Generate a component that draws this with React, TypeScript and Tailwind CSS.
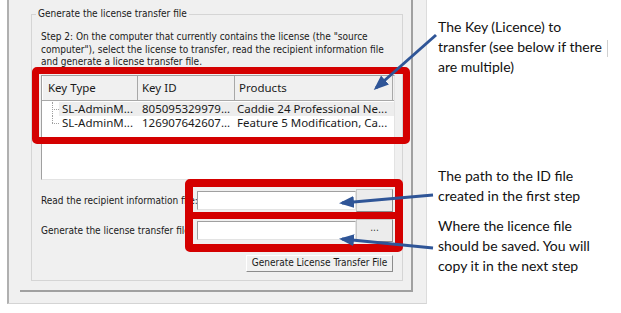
const dlg = { fontFamily: '"DejaVu Sans Condensed", "Liberation Sans", sans-serif' };
const list = { fontFamily: '"Noto Sans", "Liberation Sans", sans-serif' };
const note = { fontFamily: 'Lato, "Liberation Sans", sans-serif' };

const rows = [
  { type: "SL-AdminM...", id: "805095329979...", products: "Caddie 24 Professional Ne...", active: true },
  { type: "SL-AdminM...", id: "126907642607...", products: "Feature 5 Modification, Ca...", active: false },
];

function ListView() {
  return (
    <div className="mt-[6px] w-[354px] h-[105px] bg-white border border-[#a0a0a0] border-r-[#e3e3e3] border-b-[#e3e3e3]" style={list}>
      <div className="flex h-[25px] bg-[#f0f0f0] text-[11.5px] text-[#1a1a1a] border-b border-[#a8a8a8]">
        <div className="w-[96px] pl-[5px] flex items-center border-r border-[#a8a8a8] border-l border-l-white">Key Type</div>
        <div className="w-[97px] pl-[4px] flex items-center border-r border-[#a8a8a8]">Key ID</div>
        <div className="w-[158px] pl-[4px] flex items-center border-r border-[#a8a8a8]">Products</div>
      </div>
      <div className="pt-[1px]">
        {rows.map((r, i) => (
          <div key={i} className="flex h-[14px] text-[11.5px] leading-[14px] text-[#1a1a1a]">
            <div className="relative w-[17px]">
              <div className={`absolute left-[10px] top-0 w-0 border-l border-dotted border-[#a0a0a0] ${i === 0 ? "h-[14px]" : "h-[7px]"}`} />
              <div className="absolute left-[10px] top-[7px] w-[7px] h-0 border-t border-dotted border-[#a0a0a0]" />
            </div>
            <div className={`flex flex-1 whitespace-nowrap ${r.active ? "bg-[#ededed]" : ""}`}>
              <div className="w-[79px] pl-[3px]">{r.type}</div>
              <div className="w-[97px] pl-[4px]">{r.id}</div>
              <div className="flex-1 pl-[2px]">{r.products}</div>
            </div>
          </div>
        ))}
      </div>
    </div>
  );
}

function FileRow({ label, className }: { label: string; className: string }) {
  return (
    <div className={`flex items-center w-[352px] h-[23px] ${className}`}>
      <div className="w-[156px] overflow-hidden whitespace-nowrap text-[10px] text-[#1a1a1a]">{label}</div>
      <div className="w-[159px] h-[19px] bg-white border border-[#a0a0a0] border-r-[#e3e3e3] border-b-[#e3e3e3]" />
      <button className="w-[37px] h-[23px] bg-[#ececec] border border-[#c8c8c8] border-r-[#8c8c8c] border-b-[#8c8c8c] text-[10px] leading-[10px] text-[#333] pb-[4px]">
        ...
      </button>
    </div>
  );
}

function Dialog() {
  return (
    <div className="ml-[7px] w-[420px] h-[304px] bg-[#f0f0f0] border-l-2 border-[#b0b0b0] border-r border-r-[#dcdcdc] border-b border-b-[#d4d4d4]" style={dlg}>
      <div className="ml-[11px] w-[393px] h-[292px] border-r-2 border-b-2 border-[#a0a0a0] pt-[14px] pl-[11px]">
        <div className="relative w-[372px] h-[267px] border border-[#d5d5d5] pl-[9px] pt-[16px]">
          <span className="absolute -top-[7px] left-[4px] px-[2px] bg-[#f0f0f0] text-[10px] leading-[12px] text-[#1a1a1a]">
            Generate the license transfer file
          </span>
          <p className="text-[10px] leading-[12.5px] text-[#1a1a1a] whitespace-nowrap">
            Step 2: On the computer that currently contains the license (the "source
            <br />
            computer"), select the license to transfer, read the recipient information file
            <br />
            and generate a license transfer file.
          </p>
          <ListView />
          <FileRow label="Read the recipient information file:" className="mt-[9px]" />
          <FileRow label="Generate the license transfer file:" className="mt-[7px]" />
          <div className="flex w-[352px] mt-[13px]">
            <button className="ml-auto w-[147px] h-[17px] bg-[#f0f0f0] border border-white border-r-[#8c8c8c] border-b-[#8c8c8c] text-[10px] leading-[14px] text-[#1a1a1a]">
              Generate License Transfer File
            </button>
          </div>
        </div>
      </div>
    </div>
  );
}

function Notes() {
  return (
    <div className="ml-[11px] text-[14px] leading-[20px] text-[#111]" style={note}>
      <p className="mt-[17px]">
        The Key (Licence) to
        <br />
        transfer (see below if there
        <span className="inline-block w-px h-[17px] bg-[#d0d0d0] ml-[5px] align-middle" />
        <br />
        are multiple)
      </p>
      <p className="mt-[89px]">
        The path to the ID file
        <br />
        created in the first step
      </p>
      <p className="mt-[10px]">
        Where the licence file
        <br />
        should be saved. You will
        <br />
        copy it in the next step
      </p>
    </div>
  );
}

export default function App() {
  return (
    <div className="relative flex w-[621px] h-[313px] bg-white overflow-hidden">
      <Dialog />
      <Notes />

      {/* red highlight boxes */}
      <div className="absolute left-[32px] top-[67px] w-[378px] h-[77px] border-[7px] border-[#d40000] rounded-[5px]" />
      <div className="absolute left-[185px] top-[179px] w-[218px] h-[73px] border-[8px] border-[#d40000] rounded-[5px]">
        <div className="mt-[25px] h-[7px] bg-[#d40000]" />
      </div>

      {/* arrows */}
      <svg className="absolute inset-0 pointer-events-none" width="621" height="313">
        <defs>
          <marker id="head" markerWidth="5" markerHeight="4" refX="4" refY="2" orient="auto" markerUnits="strokeWidth">
            <path d="M0,0 L5,2 L0,4 Z" fill="#2f5597" />
          </marker>
        </defs>
        <g stroke="#2f5597" strokeWidth="3" fill="none">
          <line x1="436" y1="35" x2="376" y2="88" markerEnd="url(#head)" />
          <line x1="433" y1="195" x2="342" y2="203" markerEnd="url(#head)" />
          <line x1="433" y1="248" x2="342" y2="239" markerEnd="url(#head)" />
        </g>
      </svg>
    </div>
  );
}
